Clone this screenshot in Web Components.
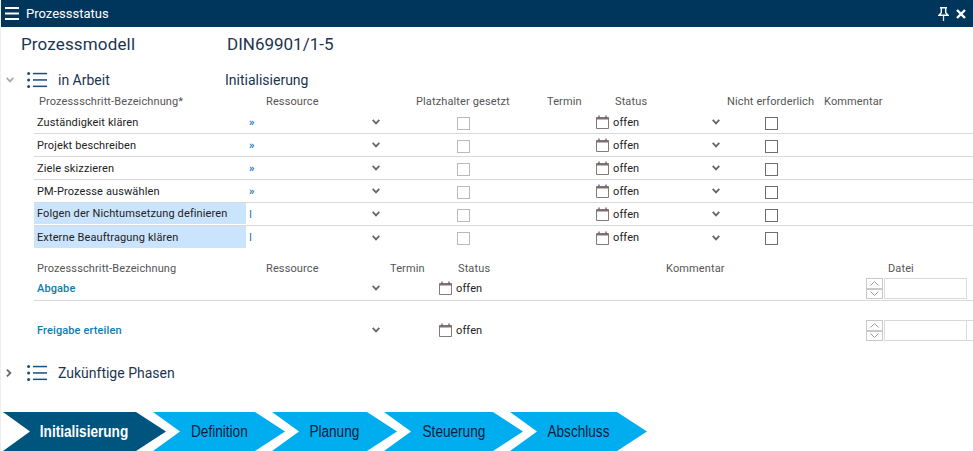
<!DOCTYPE html>
<html lang="de">
<head>
<meta charset="utf-8">
<title>Prozessstatus</title>
<style>
    html, body { margin: 0; padding: 0; background: #fff; height: 100%; overflow: hidden; }
    body { font-family: Roboto, "Liberation Sans", sans-serif; }
</style>
</head>
<body>
<status-app></status-app>

<script>
const ICONS = {
    chevronDown: `<svg width="8" height="6" viewBox="0 0 8 6"><path d="M.7.9 4 4.400 7.300.9" fill="none" stroke="#666" stroke-width="1.800"/></svg>`,
    chevronOpen: `<svg width="8" height="6" viewBox="0 0 8 6"><path d="M.7.9 4 4.400 7.300.9" fill="none" stroke="#aaa" stroke-width="1.800"/></svg>`,
    chevronRight: `<svg width="6" height="8" viewBox="0 0 6 8"><path d="M.9.7 4.400 4 .9 7.300" fill="none" stroke="#666" stroke-width="1.800"/></svg>`,
    calendar: `<svg width="13" height="14" viewBox="0 0 13 14"><path d="M.5 2.500h12v11H.5z" fill="none" stroke="#86797a" stroke-width="1"/><path d="M.5 3.500h12" stroke="#7d7069" stroke-width="2"/><path d="M3 .5v2.500M10 .5v2.500" stroke="#7a5c86" stroke-width="1.400"/></svg>`,
    list: `<svg width="20" height="16" viewBox="0 0 20 16"><g fill="#1b4d7c"><circle cx="1.600" cy="1.600" r="1.500"/><circle cx="1.600" cy="8" r="1.500"/><circle cx="1.600" cy="14.400" r="1.500"/><rect x="6" y=".8" width="14" height="1.500"/><rect x="6" y="7.200" width="14" height="1.500"/><rect x="6" y="13.600" width="14" height="1.500"/></g></svg>`,
    menu: `<svg width="14" height="13" viewBox="0 0 14 13"><g fill="#fff"><rect width="14" height="2"/><rect y="5.500" width="14" height="2"/><rect y="11" width="14" height="2"/></g></svg>`,
    pin: `<svg width="11" height="14" viewBox="0 0 11 14"><path d="M2 .7h7M3.300.7v5L1 8.200h9L7.700 5.700V.7" fill="none" stroke="#fff" stroke-width="1.400"/><path d="M5.500 8.500V14" stroke="#f0d9c0" stroke-width="1.300"/></svg>`,
    close: `<svg width="10" height="10" viewBox="0 0 10 10"><path d="M1 1l8 8M9 1l-8 8" stroke="#fff" stroke-width="2.400"/></svg>`
};

class TitleBar extends HTMLElement {
    connectedCallback() {
        this.attachShadow({ mode: 'open' }).innerHTML = `
            <style>
                :host { display: flex; align-items: center; height: 27px; background: #00365c; color: #fff; font-size: 13px; padding: 0 7px 0 4px; }
                .title { margin-left: 7px; flex: 1; }
                .tools { display: flex; align-items: center; gap: 7px; }
                svg { display: block; }
            </style>
            ${ICONS.menu}
            <span class="title"><slot></slot></span>
            <span class="tools">${ICONS.pin}${ICONS.close}</span>
        `;
    }
}

class ModelHeader extends HTMLElement {
    connectedCallback() {
        this.attachShadow({ mode: 'open' }).innerHTML = `
            <style>
                :host { display: flex; box-sizing: border-box; height: 35px; padding: 0 0 2px 20px; align-items: center; color: #1a3550; font-size: 17px; }
                .name { width: 206px; letter-spacing: .15px; }
            </style>
            <span class="name">${this.getAttribute('name')}</span>
            <span>${this.getAttribute('value')}</span>
        `;
    }
}

class PhaseHeading extends HTMLElement {
    connectedCallback() {
        const open = this.hasAttribute('open');
        this.attachShadow({ mode: 'open' }).innerHTML = `
            <style>
                :host { display: flex; align-items: center; height: 22px; color: #1a3550; font-size: 14px; }
                .toggle { width: 26px; padding-left: 5px; box-sizing: border-box; display: flex; }
                .icon { width: 31px; display: flex; }
                .label { width: 167px; }
                svg { display: block; }
            </style>
            <span class="toggle">${open ? ICONS.chevronOpen : ICONS.chevronRight}</span>
            <span class="icon">${ICONS.list}</span>
            <span class="label">${this.getAttribute('label')}</span>
            <span>${this.getAttribute('phase') || ''}</span>
        `;
    }
}

// column header line, x values are given by the widths attribute
class HeaderRow extends HTMLElement {
    connectedCallback() {
        const labels = this.getAttribute('labels').split('|');
        this.attachShadow({ mode: 'open' }).innerHTML = `
            <style>
                :host { display: grid; grid-template-columns: ${this.getAttribute('widths')}; align-items: center; height: ${this.getAttribute('height') || 18}px; color: #555; font-size: 11px; padding-left: ${this.getAttribute('inset')}px; white-space: nowrap; letter-spacing: .12px; }
            </style>
            ${labels.map(l => `<span>${l}</span>`).join('')}
        `;
    }
}

class StepRow extends HTMLElement {
    connectedCallback() {
        const marker = this.getAttribute('marker');
        this.attachShadow({ mode: 'open' }).innerHTML = `
            <style>
                :host { display: grid; height: 23px; box-sizing: border-box; margin-left: 33px; border-bottom: 1px solid #d9d9d9; color: #222; font-size: 11px; letter-spacing: .12px;
                    grid-template-columns: 212px 118px 24px 69px 13px 126px 17px 91px 24px 37px 13px 1fr; align-items: center; }
                :host([last]) { border-bottom: 0; }
                .name { align-self: stretch; display: flex; align-items: center; padding-left: 3px; white-space: nowrap; }
                :host([pending]) .name { background: #cbe4fd; margin-bottom: 1px; }
                .res { padding-left: 3px; color: #1779b5; font-weight: 700; }
                :host([pending]) .res { font-weight: 400; }
                .ctr { display: flex; justify-content: center; }
                .box { width: 13px; height: 13px; box-sizing: border-box; border: 1px solid #b9b9b9; margin-top: 2px; }
                .box.on { border-color: #6e6e6e; }
                svg { display: block; }
            </style>
            <span class="name"><slot></slot></span>
            <span class="res">${marker}</span>
            <span class="ctr">${ICONS.chevronDown}</span>
            <span></span>
            <span class="box"></span>
            <span></span>
            <span>${ICONS.calendar}</span>
            <span>offen</span>
            <span class="ctr">${ICONS.chevronDown}</span>
            <span></span>
            <span class="box on"></span>
        `;
    }
}

class DeliverableRow extends HTMLElement {
    connectedCallback() {
        this.attachShadow({ mode: 'open' }).innerHTML = `
            <style>
                :host { display: grid; box-sizing: border-box; height: 28px; margin-left: 33px; color: #222; font-size: 11px; letter-spacing: .12px;
                    grid-template-columns: 330px 24px 51px 17px 410px 18px 1fr; align-items: center; }
                :host([ruled]) { height: 24px; padding-bottom: 1px; border-bottom: 1px solid #d9d9d9; }
                .name { padding-left: 3px; color: #0c7cb5; font-weight: 500; }
                .ctr { display: flex; justify-content: center; }
                .spin { width: 17px; height: 21px; box-sizing: border-box; border: 1px solid #c8c8c8; display: grid; grid-template-rows: 1fr 1fr; background: #fff; }
                .spin span { display: flex; align-items: center; justify-content: center; }
                .spin span + span { border-top: 2px solid #c8c8c8; }
                .field { height: 21px; box-sizing: border-box; border: 1px solid #d9d9d9; border-right: 0; }
                .field div { width: 81px; height: 100%; border-right: 1px solid #d9d9d9; }
                :host([ruled]) .field { width: 83px; border-right: 1px solid #d9d9d9; }
                :host([ruled]) .field div { border: 0; }
                svg { display: block; }
            </style>
            <span class="name"><slot></slot></span>
            <span class="ctr">${ICONS.chevronDown}</span>
            <span></span>
            <span>${ICONS.calendar}</span>
            <span>offen</span>
            <span class="spin">
                <span><svg width="9" height="5" viewBox="0 0 9 5"><path d="M.5 4.500l4-4 4 4" fill="none" stroke="#9a9a9a"/></svg></span>
                <span><svg width="9" height="5" viewBox="0 0 9 5"><path d="M.5.500l4 4 4-4" fill="none" stroke="#9a9a9a"/></svg></span>
            </span>
            <span class="field"><div></div></span>
        `;
    }
}

class ProcessStep extends HTMLElement {
    connectedCallback() {
        this.attachShadow({ mode: 'open' }).innerHTML = `
            <style>
                :host { display: flex; align-items: center; justify-content: center; box-sizing: border-box; height: 39px; margin-right: -13px;
                    background: #00aef0; color: #06203a; font: 16px "Liberation Sans", Arial, sans-serif;
                    clip-path: polygon(0 0, calc(100% - 30px) 0, 100% 50%, calc(100% - 30px) 100%, 0 100%, 27px 50%); }
                :host([active]) { background: #00557e; color: #fff; font-weight: 700; }
                span { display: block; transform: scaleX(.85); white-space: nowrap; }
            </style>
            <span><slot></slot></span>
        `;
    }
}

class ProcessBar extends HTMLElement {
    connectedCallback() {
        this.attachShadow({ mode: 'open' }).innerHTML = `
            <style>
                :host { display: flex; padding-left: 2px; }
            </style>
            <slot></slot>
        `;
    }
}

class StatusApp extends HTMLElement {
    connectedCallback() {
        const steps = [
            ['Zuständigkeit klären', '»'],
            ['Projekt beschreiben', '»'],
            ['Ziele skizzieren', '»'],
            ['PM-Prozesse auswählen', '»'],
            ['Folgen der Nichtumsetzung definieren', 'I', 'pending'],
            ['Externe Beauftragung klären', 'I', 'pending last']
        ];
        const bar = [['Initialisierung', 163, 'active'], ['Definition', 132], ['Planung', 125], ['Steuerung', 139], ['Abschluss', 137]];
        this.attachShadow({ mode: 'open' }).innerHTML = `
            <style>
                :host { display: flex; flex-direction: column; height: 451px; overflow: hidden; border-left: 1px solid #eee; box-sizing: border-box; }
                .sp0 { height: 7px; }
                .sp1 { height: 10px; }
                .gap { height: 15px; }
                .sp2 { height: 18px; }
                .sp3 { height: 28px; }
            </style>
            <title-bar>Prozessstatus</title-bar>
            <model-header name="Prozessmodell" value="DIN69901/1-5"></model-header>
            <div class="sp0"></div>
            <phase-heading open label="in Arbeit" phase="Initialisierung"></phase-heading>
            <header-row inset="38" height="20" widths="227px 150px 131px 68px 112px 97px 1fr"
                labels="Prozessschritt-Bezeichnung*|Ressource|Platzhalter gesetzt|Termin|Status|Nicht erforderlich|Kommentar"></header-row>
            ${steps.map(s => `<step-row marker="${s[1]}" ${s[2] || ''}>${s[0]}</step-row>`).join('')}
            <div class="sp1"></div>
            <header-row inset="36" widths="229px 124px 68px 208px 222px 1fr"
                labels="Prozessschritt-Bezeichnung|Ressource|Termin|Status|Kommentar|Datei"></header-row>
            <deliverable-row ruled>Abgabe</deliverable-row>
            <div class="gap"></div>
            <deliverable-row>Freigabe erteilen</deliverable-row>
            <div class="sp2"></div>
            <phase-heading label="Zukünftige Phasen"></phase-heading>
            <div class="sp3"></div>
            <process-bar>
                ${bar.map(b => `<process-step ${b[2] || ''} style="width:${b[1]}px">${b[0]}</process-step>`).join('')}
            </process-bar>
        `;
    }
}

customElements.define('title-bar', TitleBar);
customElements.define('model-header', ModelHeader);
customElements.define('phase-heading', PhaseHeading);
customElements.define('header-row', HeaderRow);
customElements.define('step-row', StepRow);
customElements.define('deliverable-row', DeliverableRow);
customElements.define('process-step', ProcessStep);
customElements.define('process-bar', ProcessBar);
customElements.define('status-app', StatusApp);
</script>
</body>
</html>
